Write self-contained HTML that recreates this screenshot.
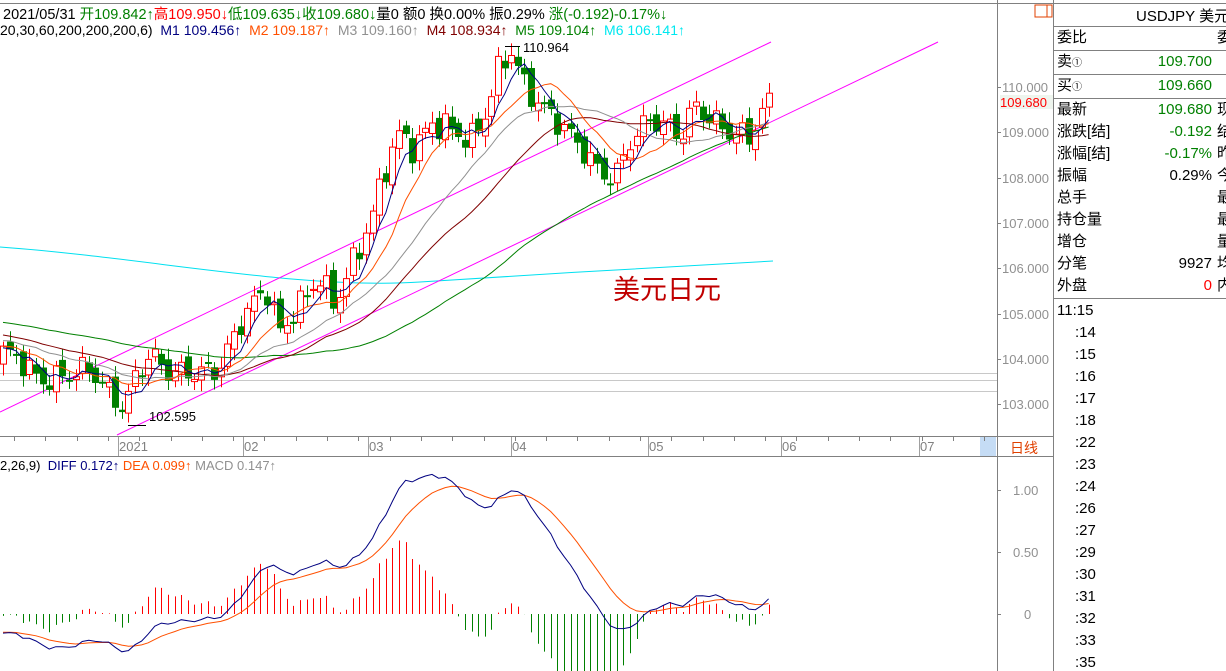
<!DOCTYPE html>
<html><head><meta charset="utf-8"><style>
*{margin:0;padding:0;box-sizing:border-box}
body{width:1226px;height:671px;overflow:hidden;background:#fff;font-family:"Liberation Sans","Noto Sans CJK SC",sans-serif;position:relative;color:#000}
.t{position:absolute;white-space:nowrap;font-size:13px}
.hd{font-size:14.5px}
.hd2{font-size:14px}
svg{position:absolute;left:0;top:0}
.rp{position:absolute;left:1053px;top:0;width:173px;height:671px;border-left:1px solid #808080;font-size:15px}
.row{position:absolute;left:3px;width:170px;height:22px;line-height:22px}
.row .v{position:absolute;right:15px}
.row .r{position:absolute;left:160px}
.hl{position:absolute;left:0;width:173px;height:1px;background:#808080}
</style></head><body>
<svg id="s" width="1226" height="671"></svg>
<div class="t hd" style="left:3px;top:3px">2021/05/31 <span style="color:#008000">开109.842↑</span><span style="color:#f00">高109.950↓</span><span style="color:#008000">低109.635↓</span><span style="color:#008000">收109.680↓</span>量0 额0 换0.00% 振0.29% <span style="color:#008000">涨(-0.192)-0.17%↓</span></div>
<div class="t hd2" style="left:0;top:22px">20,30,60,200,200,200,6) &nbsp;<span style="color:#000080">M1 109.456↑</span> &nbsp;<span style="color:#ff5000">M2 109.187↑</span> &nbsp;<span style="color:#909090">M3 109.160↑</span> &nbsp;<span style="color:#800000">M4 108.934↑</span> &nbsp;<span style="color:#008000">M5 109.104↑</span> &nbsp;<span style="color:#00e8f0">M6 106.141↑</span></div>
<div class="t" style="left:523px;top:40px">110.964</div>
<div class="t" style="left:149px;top:409px">102.595</div>
<div class="t" style="left:613px;top:268px;font-size:27px;color:#c00000">美元日元</div>
<div class="t" style="left:0;top:458px">2,26,9) &nbsp;<span style="color:#000080">DIFF 0.172↑</span> <span style="color:#ff5000">DEA 0.099↑</span> <span style="color:#909090">MACD 0.147↑</span></div>
<div class="t" style="left:1010px;top:438px;color:#e04000;font-size:14px">日线</div>
<div class="rp">
<div class="t" style="left:82px;top:5px;font-size:15px">USDJPY 美元</div>
<div class="hl" style="top:26px"></div>
<div class="row" style="top:27px">委比<span class="r">委</span></div>
<div class="hl" style="top:50px"></div>
<div class="row" style="top:51px">卖<span style="font-size:10px">①</span><span class="v" style="color:#008000">109.700</span></div>
<div class="hl" style="top:74px"></div>
<div class="row" style="top:75px">买<span style="font-size:10px">①</span><span class="v" style="color:#008000">109.660</span></div>
<div class="hl" style="top:98px"></div>
<div class="row" style="top:99px">最新<span class="v" style="color:#008000">109.680</span><span class="r">现</span></div>
<div class="row" style="top:121px">涨跌[结]<span class="v" style="color:#008000">-0.192</span><span class="r">结</span></div>
<div class="row" style="top:143px">涨幅[结]<span class="v" style="color:#008000">-0.17%</span><span class="r">昨</span></div>
<div class="row" style="top:165px">振幅<span class="v">0.29%</span><span class="r">今</span></div>
<div class="row" style="top:187px">总手<span class="r">最</span></div>
<div class="row" style="top:209px">持仓量<span class="r">最</span></div>
<div class="row" style="top:231px">增仓<span class="r">量</span></div>
<div class="row" style="top:253px">分笔<span class="v">9927</span><span class="r">均</span></div>
<div class="row" style="top:275px">外盘<span class="v" style="color:#f00">0</span><span class="r">内</span></div>
<div class="hl" style="top:298px"></div>
<div id="tm"></div>
</div>
<script>
var tm=document.getElementById('tm'),ts=["11:15",":14",":15",":16",":17",":18",":22",":23",":24",":26",":27",":29",":30",":31",":32",":33",":35"];
ts.forEach(function(t,i){var d=document.createElement('div');d.className='t';d.style.cssText='font-size:15px;top:'+(302+i*22)+'px;left:'+(i?21:3)+'px';d.textContent=t;tm.appendChild(d);});
var S=document.getElementById('s'),h='';
function L(x1,y1,x2,y2,c,w){h+='<line x1="'+x1+'" y1="'+y1+'" x2="'+x2+'" y2="'+y2+'" stroke="'+c+'" stroke-width="'+(w||1)+'"/>';}
function py(p){return 87+(110-p)*45.3}
function my(v){return 614-v*124}
L(0,3.5,1226,3.5,'#808080');
L(997.5,0,997.5,671,'#808080');
L(0,436.5,1053,436.5,'#808080');L(0,456.5,1053,456.5,'#808080');
h+='<rect x="980" y="437" width="16" height="19" fill="#c5dcf5"/>';
h+='<rect x="1035" y="5" width="17" height="12" fill="none" stroke="#e04000"/><line x1="1047" y1="5" x2="1047" y2="17" stroke="#e04000"/>';
[[110,'110.000'],[109,'109.000'],[108,'108.000'],[107,'107.000'],[106,'106.000'],[105,'105.000'],[104,'104.000'],[103,'103.000']].forEach(function(a){var y=Math.round(py(a[0]));L(997,y+.5,1001,y+.5,'#808080');h+='<text x="1002" y="'+(y+5)+'" font-size="13" fill="#909090" font-family="Liberation Sans">'+a[1]+'</text>';});
h+='<rect x="1000" y="95" width="53" height="14" fill="#eef5ee"/><text x="1000" y="107" font-size="13" fill="#f00" font-family="Liberation Sans">109.680</text>';
[[1,'1.00',1013],[.5,'0.50',1013],[0,'0',1024]].forEach(function(a){var y=Math.round(my(a[0]));L(997,y+.5,1001,y+.5,'#808080');h+='<text x="'+a[2]+'" y="'+(y+5)+'" font-size="13" fill="#909090" font-family="Liberation Sans">'+a[1]+'</text>';});
for(var x=14;x<990;x+=31.3)L(Math.round(x)+.5,437,Math.round(x)+.5,441,'#808080');
[['2021',118],['02',243],['03',368],['04',511],['05',648],['06',781],['07',919]].forEach(function(a){L(a[1]+.5,437,a[1]+.5,456,'#a0a0a0');h+='<text x="'+(a[1]+1)+'" y="451" font-size="13" fill="#808080" font-family="Liberation Sans">'+a[0]+'</text>';});
[373.5,380.5,391.5].forEach(function(y){L(0,y,997,y,'#c8c8c8');});
var K=[[-400,105.3],[-200,104.9],[0,104.2],[20,104.0],[40,103.5],[60,103.6],[90,103.8],[110,103.2],[125,102.9],[135,103.6],[150,104.1],[170,103.7],[200,103.7],[220,103.8],[240,104.8],[265,105.6],[280,104.6],[300,105.2],[318,105.8],[335,105.2],[350,106.0],[370,107.0],[385,108.2],[400,109.0],[415,108.6],[430,109.2],[450,109.1],[470,108.8],[485,109.4],[500,110.5],[512,110.8],[525,110.0],[540,109.6],[560,109.2],[580,108.7],[600,108.1],[615,108.0],[630,108.8],[650,109.3],[670,109.1],[680,108.9],[695,109.6],[710,109.3],[730,109.0],[750,108.9],[765,109.6],[775,109.7]];
function ip(x){for(var i=1;i<K.length;i++)if(x<=K[i][0]){var a=K[i-1],b=K[i];return a[1]+(b[1]-a[1])*(x-a[0])/(b[0]-a[0]);}return 109.7}
var sp=6.6,N=117,P=80,C=[];
for(var i=-P;i<N;i++){var x=3+i*sp;C.push(ip(x)+0.22*Math.sin(i*1.7)+0.13*Math.sin(i*3.1+1));}
function ma(n,j){var s=0;for(var k=j-n+1;k<=j;k++)s+=C[Math.max(0,k)];return s/n}
function pl(n,c){var d='';for(var i=0;i<N;i++){var j=i+P;d+=(i?'L':'M')+(3+i*sp).toFixed(1)+' '+py(ma(n,j)).toFixed(1);}h+='<path d="'+d+'" fill="none" stroke="'+c+'"/>';}
h+='<path d="M0 247 C150 258 300 290 420 282 S650 268 773 261" fill="none" stroke="#00e0f0"/>';
L(0,412,771,42,'#ff00ff');L(117,435,938,42,'#ff00ff');
for(var i=0;i<N;i++){var j=i+P,c=C[j],o=C[j-1]+0.12*Math.sin(i*2.3);var x=Math.round(3+i*sp);var hi=Math.max(o,c)+0.1+0.15*Math.abs(Math.sin(i*5.1)),lo=Math.min(o,c)-0.1-0.15*Math.abs(Math.cos(i*4.3));
if(i==19){lo=102.595}if(i==77){hi=110.964}
var up=c>=o,col=up?'#f00':'#008000';var t=py(Math.max(o,c)),b=py(Math.min(o,c));if(b-t<1)b=t+1;
L(x+.5,py(hi),x+.5,t,col);L(x+.5,b,x+.5,py(lo),col);
h+='<rect x="'+(x-2.5)+'" y="'+t.toFixed(1)+'" width="6" height="'+(b-t).toFixed(1)+'" fill="'+(up?'#fff':'#008000')+'" stroke="'+col+'"/>';}
pl(60,'#008000');pl(30,'#800000');pl(20,'#909090');pl(10,'#ff5000');pl(5,'#000080');
L(128,425.5,146,425.5,'#000');L(505,46.5,520,46.5,'#000');
function ema(n){var e=[],a=2/(n+1);for(var j=0;j<C.length;j++)e.push(j?e[j-1]+a*(C[j]-e[j-1]):C[0]);return e}
var e12=ema(12),e26=ema(26),D=[],E=[];for(var j=0;j<C.length;j++){D.push(e12[j]-e26[j]);E.push(j?E[j-1]+0.2*(D[j]-E[j-1]):D[0]);}
var dd='',de='';for(var i=0;i<N;i++){var j=i+P,x=3+i*sp,m=2*(D[j]-E[j]);var col=m>=0?'#f00':'#008000';var xx=Math.round(x)+.5;L(xx,my(0),xx,Math.max(my(m),460),col);
dd+=(i?'L':'M')+x.toFixed(1)+' '+my(D[j]).toFixed(1);de+=(i?'L':'M')+x.toFixed(1)+' '+my(E[j]).toFixed(1);}
h+='<path d="'+de+'" fill="none" stroke="#ff5000"/><path d="'+dd+'" fill="none" stroke="#000080"/>';
S.innerHTML=h;
</script>
</body></html>
